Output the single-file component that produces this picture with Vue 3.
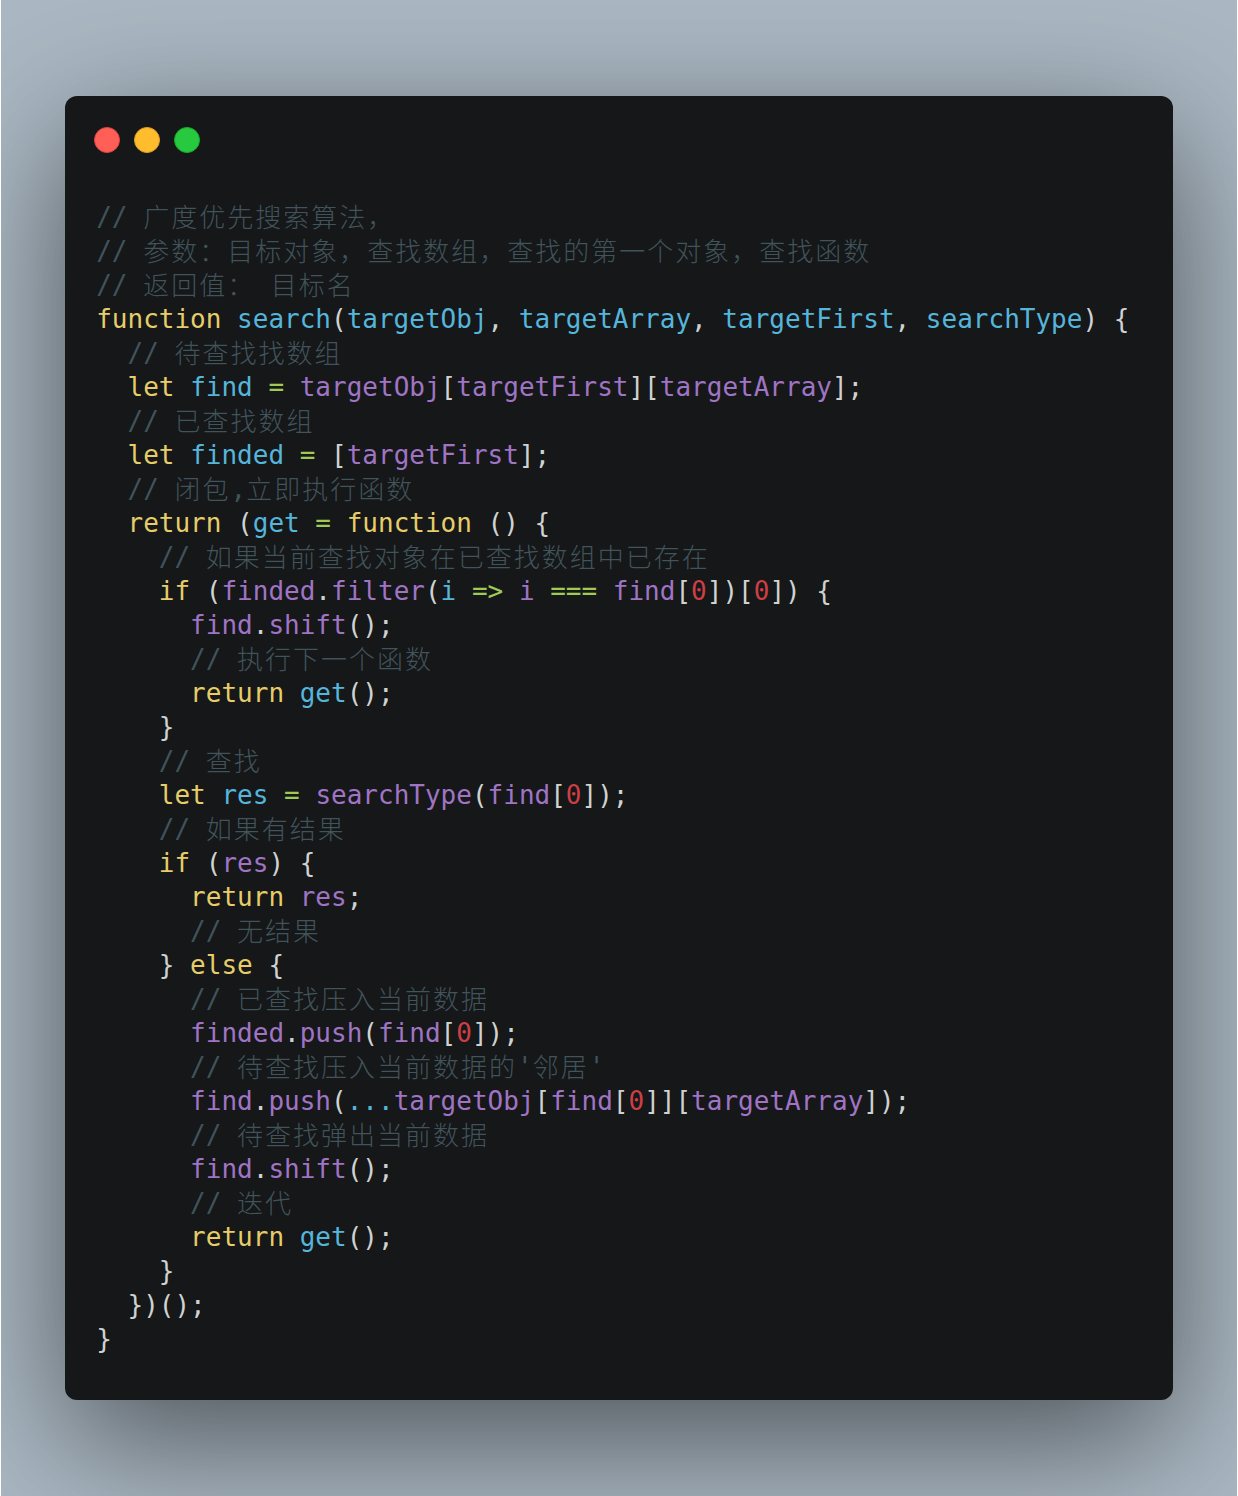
<script setup>
const k = (t) => ['k', t]
const d = (t) => ['d', t]
const v = (t) => ['v', t]
const o = (t) => ['o', t]
const n = (t) => ['n', t]

const comment = (indent, text) => {
  const parts = text.match(/[\u3000-\u9fff\uff00-\uffef]+|[^\u3000-\u9fff\uff00-\uffef]+/g)
  return [
    ' '.repeat(indent),
    ...parts.map((p) => (/[\u3000-\u9fff\uff00-\uffef]/.test(p) ? ['cjk', p] : ['c', p])),
  ]
}

const rows = [
  comment(0, '// 广度优先搜索算法\uff0c'),
  comment(0, '// 参数\uff1a目标对象\uff0c查找数组\uff0c查找的第一个对象\uff0c查找函数'),
  comment(0, '// 返回值\uff1a 目标名'),
  [k('function'), ' ', d('search'), '(', d('targetObj'), ', ', d('targetArray'), ', ', d('targetFirst'), ', ', d('searchType'), ') {'],
  comment(2, '// 待查找找数组'),
  ['  ', k('let'), ' ', d('find'), ' ', o('='), ' ', v('targetObj'), '[', v('targetFirst'), '][', v('targetArray'), '];'],
  comment(2, '// 已查找数组'),
  ['  ', k('let'), ' ', d('finded'), ' ', o('='), ' [', v('targetFirst'), '];'],
  comment(2, '// 闭包,立即执行函数'),
  ['  ', k('return'), ' (', d('get'), ' ', o('='), ' ', k('function'), ' () {'],
  comment(4, '// 如果当前查找对象在已查找数组中已存在'),
  ['    ', k('if'), ' (', v('finded'), '.', v('filter'), '(', d('i'), ' ', o('=>'), ' ', v('i'), ' ', o('==='), ' ', v('find'), '[', n('0'), '])[', n('0'), ']) {'],
  ['      ', v('find'), '.', v('shift'), '();'],
  comment(6, '// 执行下一个函数'),
  ['      ', k('return'), ' ', d('get'), '();'],
  ['    }'],
  comment(4, '// 查找'),
  ['    ', k('let'), ' ', d('res'), ' ', o('='), ' ', v('searchType'), '(', v('find'), '[', n('0'), ']);'],
  comment(4, '// 如果有结果'),
  ['    ', k('if'), ' (', v('res'), ') {'],
  ['      ', k('return'), ' ', v('res'), ';'],
  comment(6, '// 无结果'),
  ['    } ', k('else'), ' {'],
  comment(6, '// 已查找压入当前数据'),
  ['      ', v('finded'), '.', v('push'), '(', v('find'), '[', n('0'), ']);'],
  comment(6, "// 待查找压入当前数据的'邻居'"),
  ['      ', v('find'), '.', v('push'), '(', d('...'), v('targetObj'), '[', v('find'), '[', n('0'), ']][', v('targetArray'), ']);'],
  comment(6, '// 待查找弹出当前数据'),
  ['      ', v('find'), '.', v('shift'), '();'],
  comment(6, '// 迭代'),
  ['      ', k('return'), ' ', d('get'), '();'],
  ['    }'],
  ['  })();'],
  ['}'],
].map((r) => r.map((t) => (typeof t === 'string' ? ['p', t] : t)))
</script>

<template>
  <div class="page">
    <section class="window">
      <header class="controls">
        <span class="dot red"></span>
        <span class="dot yellow"></span>
        <span class="dot green"></span>
      </header>
      <div class="code">
        <div v-for="(row, i) in rows" :key="i" class="line"><span v-for="(tok, j) in row" :key="j" :class="tok[0]">{{ tok[1] }}</span></div>
      </div>
    </section>
  </div>
</template>

<style scoped>
.page {
  margin: 0 1px;
  height: 1496px;
  box-sizing: border-box;
  padding: 96px 64px;
  background: #abb8c3;
  overflow: hidden;
}
.window {
  height: 1304px;
  box-sizing: border-box;
  padding: 31px 29px 0;
  background: #151718;
  border-radius: 12px;
  box-shadow: 0 40px 136px rgba(0, 0, 0, 0.55);
}
.controls {
  display: flex;
  gap: 14px;
  height: 26px;
}
.dot {
  width: 26px;
  height: 26px;
  box-sizing: border-box;
  border-radius: 50%;
  border: 1px solid;
}
.red {
  background: #ff5f56;
  border-color: #e0443e;
}
.yellow {
  background: #ffbd2e;
  border-color: #dea123;
}
.green {
  background: #27c93f;
  border-color: #1aab29;
}
.code {
  margin-top: 47px;
  padding-left: 2.2px;
  font-family: "DejaVu Sans Mono", "Noto Sans CJK SC", monospace;
  font-size: 26px;
  line-height: 34px;
  color: #cfd2d1;
}
.line {
  height: 34px;
  white-space: pre;
}
.p { color: #cfd2d1; }
.k { color: #e6cd69; }
.d { color: #55b5db; }
.v { color: #a074c4; }
.o { color: #9fca56; }
.n { color: #cd3f45; }
.c { color: #41535b; }
.cjk {
  color: #41535b;
  letter-spacing: 2px;
  line-height: 0;
  vertical-align: -1px;
  font-family: "Noto Sans CJK SC", sans-serif;
  font-weight: 300;
}
</style>
